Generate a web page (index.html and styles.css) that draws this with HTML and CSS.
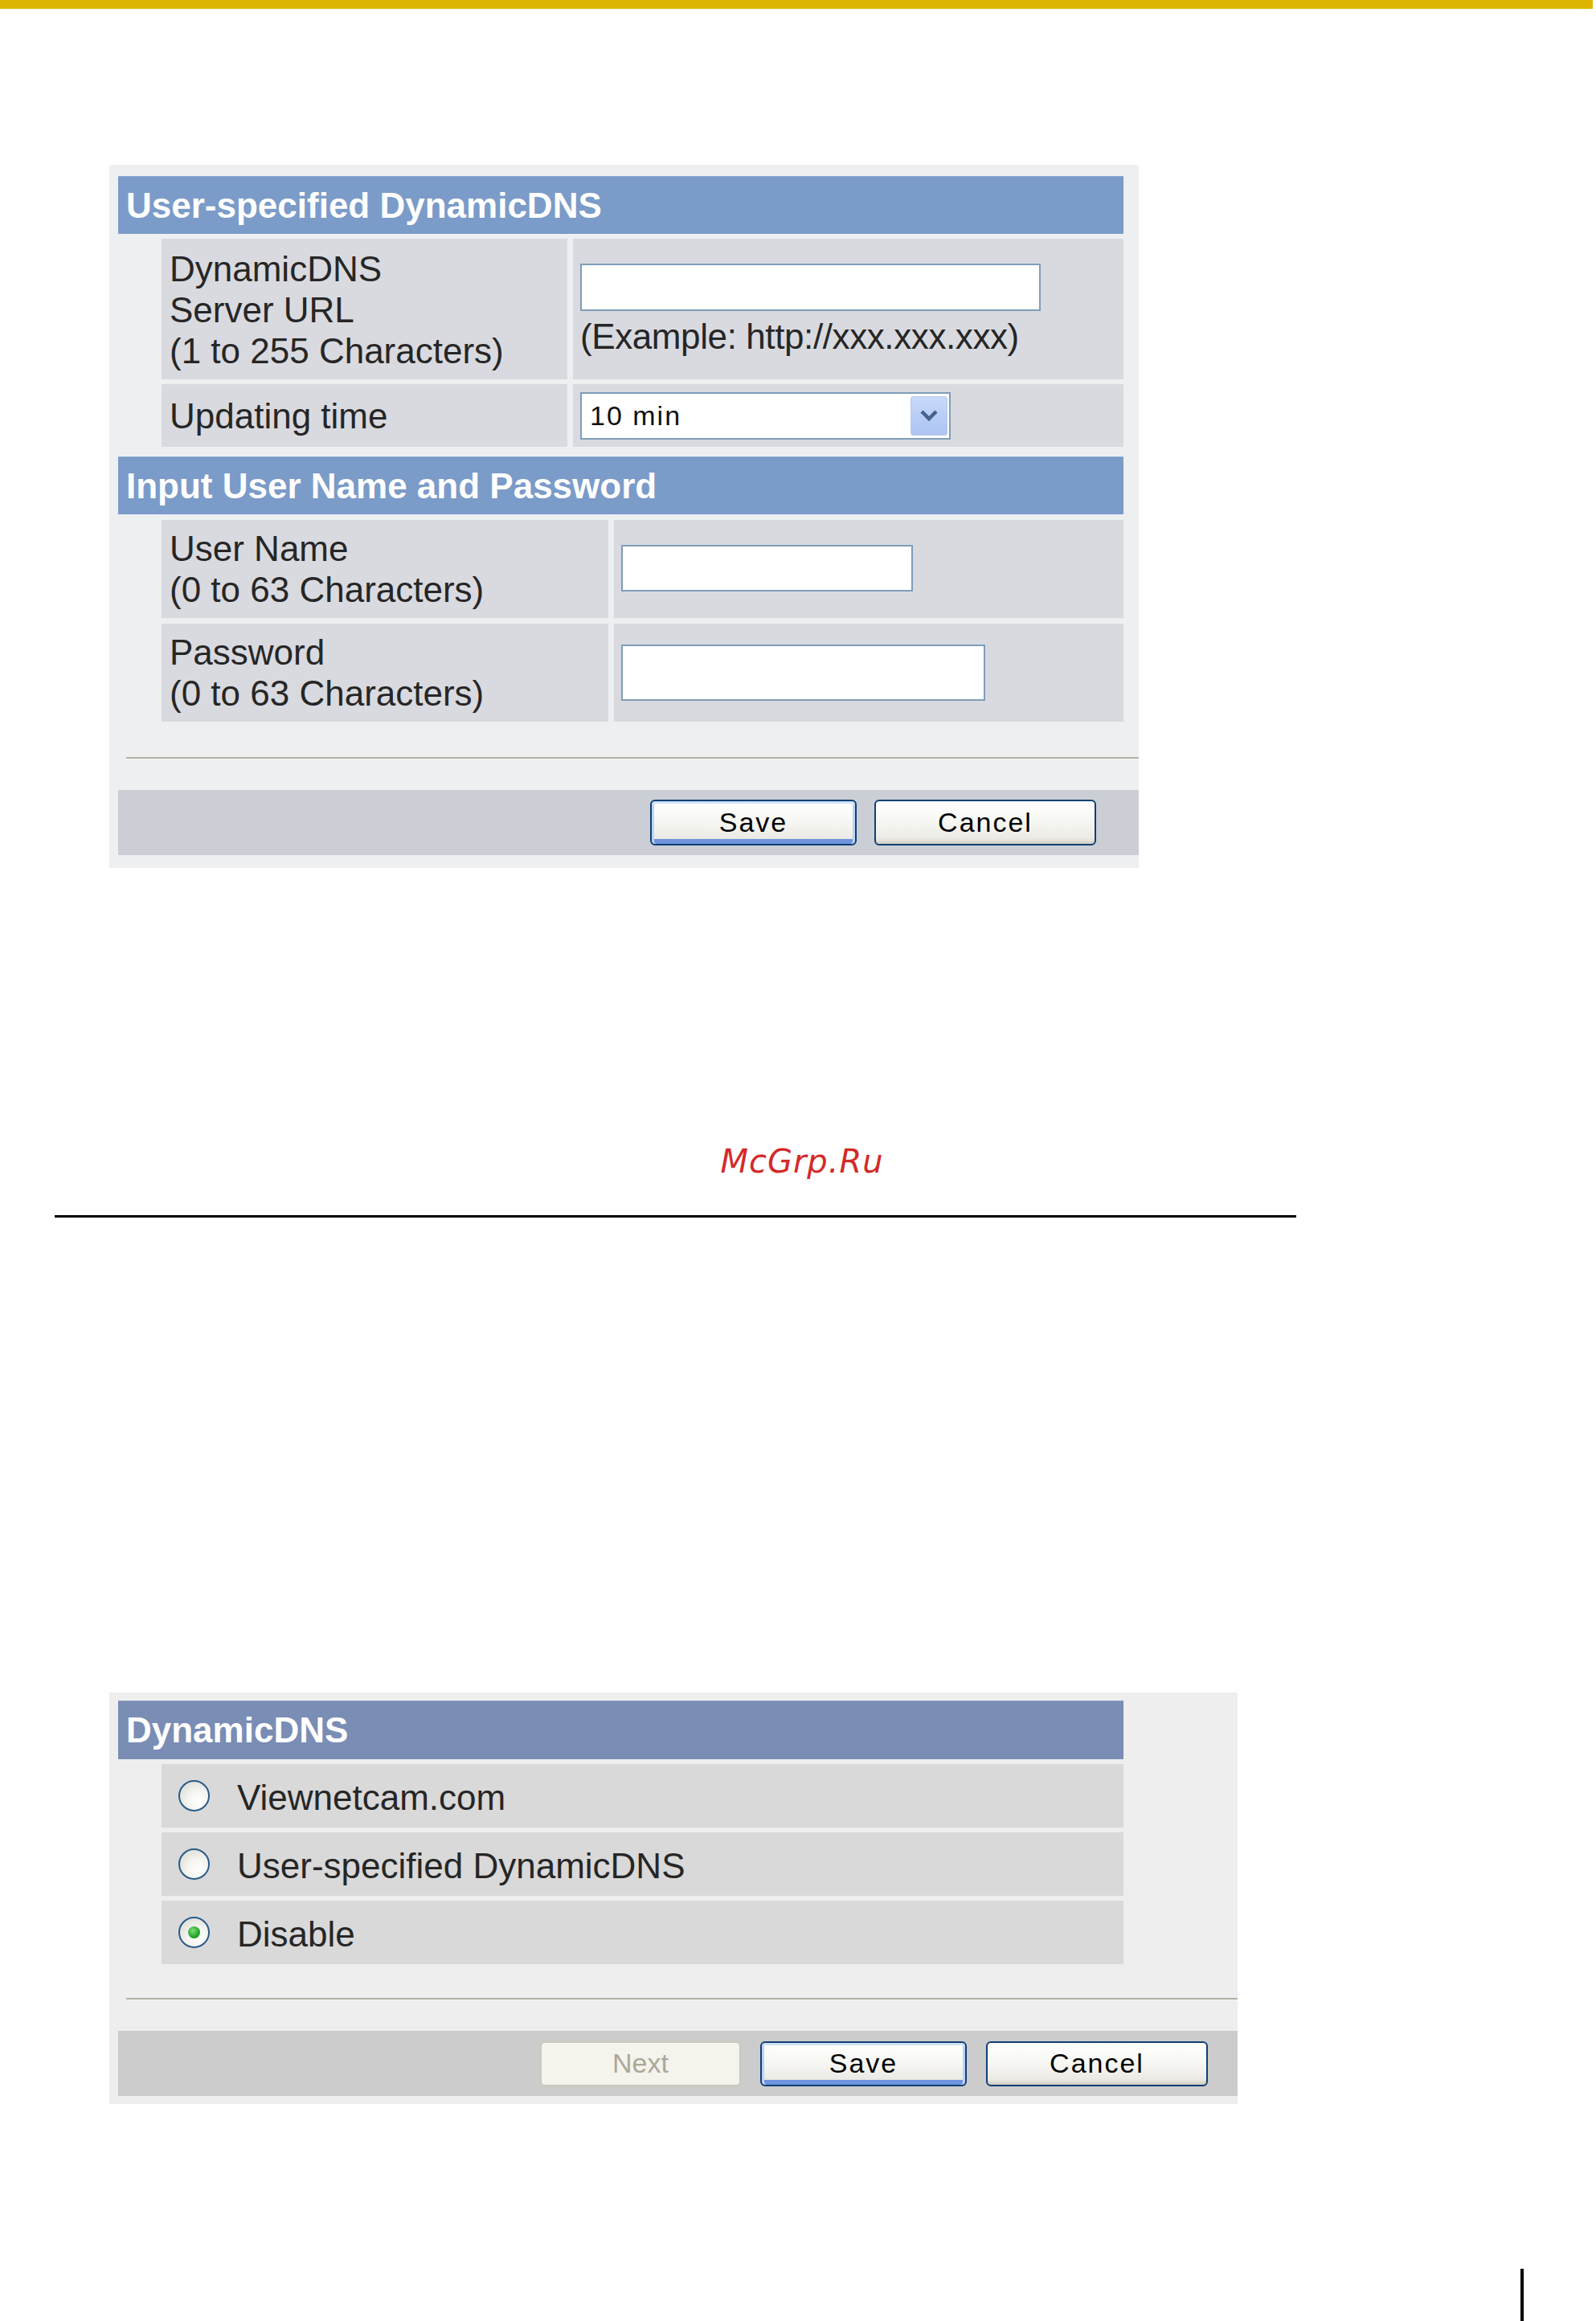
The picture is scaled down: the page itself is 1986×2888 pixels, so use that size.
FILE: index.html
```html
<!DOCTYPE html>
<html lang="en">
<head>
<meta charset="utf-8">
<title>DynamicDNS settings</title>
<link rel="stylesheet" href="styles.css">
</head>
<body>
<div class="topbar"></div>

<section class="panel panel-user">
  <div class="section-head">User-specified DynamicDNS</div>
  <div class="row row-url">
    <div class="cell label label-wide">DynamicDNS<br>Server URL<br>(1 to 255 Characters)</div>
    <div class="cell value value-stack">
      <input class="field field-url" type="text">
      <span class="hint">(Example: http://xxx.xxx.xxx)</span>
    </div>
  </div>
  <div class="row row-time">
    <div class="cell label label-wide">Updating time</div>
    <div class="cell value">
      <div class="select">
        <span class="select-text">10 min</span>
        <span class="select-arrow">
          <svg width="24" height="16" viewBox="0 0 24 16"><path d="M3 3 L12 12 L21 3" fill="none" stroke="#44628f" stroke-width="4.5" stroke-linejoin="miter"/></svg>
        </span>
      </div>
    </div>
  </div>

  <div class="section-head section-gap">Input User Name and Password</div>
  <div class="row row-cred">
    <div class="cell label label-narrow">User Name<br>(0 to 63 Characters)</div>
    <div class="cell value">
      <input class="field field-user" type="text">
    </div>
  </div>
  <div class="row row-cred">
    <div class="cell label label-narrow">Password<br>(0 to 63 Characters)</div>
    <div class="cell value">
      <input class="field field-pass" type="password">
    </div>
  </div>

  <div class="divider"></div>
  <div class="button-bar">
    <button class="btn btn-default btn-save">Save</button>
    <button class="btn btn-cancel">Cancel</button>
  </div>
</section>

<div class="watermark">McGrp.Ru</div>
<div class="rule"></div>

<section class="panel panel-mode">
  <div class="section-head">DynamicDNS</div>
  <div class="row choice">
    <span class="radio"></span>
    <span class="choice-text">Viewnetcam.com</span>
  </div>
  <div class="row choice">
    <span class="radio"></span>
    <span class="choice-text">User-specified DynamicDNS</span>
  </div>
  <div class="row choice">
    <span class="radio radio-on"></span>
    <span class="choice-text">Disable</span>
  </div>

  <div class="divider"></div>
  <div class="button-bar">
    <button class="btn btn-disabled btn-next" disabled>Next</button>
    <button class="btn btn-default btn-save">Save</button>
    <button class="btn btn-cancel">Cancel</button>
  </div>
</section>

<div class="endmark"></div>
</body>
</html>
```

FILE: styles.css
```css
* {
  box-sizing: border-box;
}

html,
body {
  margin: 0;
  padding: 0;
  background: #ffffff;
}

body {
  width: 1986px;
  height: 2888px;
  overflow: hidden;
  font-family: "Liberation Sans", Arial, sans-serif;
  font-size: 44px;
  line-height: 51px;
  color: #262626;
}

.topbar {
  width: 1982px;
  height: 11px;
  background: #ddb500;
}

/* ---------- settings panels ---------- */

.panel {
  margin-left: 136px;
  display: flex;
  flex-direction: column;
}

.panel-user {
  margin-top: 194px;
  width: 1281px;
  height: 875px;
  padding-top: 14px;
  background: #eeeff1;
}

.panel-mode {
  margin-top: 591px;
  width: 1404px;
  height: 512px;
  padding-top: 10px;
  background: #eeeeee;
}

.section-head {
  margin-left: 11px;
  width: 1251px;
  height: 72px;
  padding-left: 10px;
  line-height: 72px;
  font-weight: bold;
  font-size: 44px;
  color: #ffffff;
  background: #7b9bc8;
  border-top: 1px solid #8eabd3;
}

.section-gap {
  margin-top: 12px;
}

.panel-mode .section-head {
  height: 73px;
  line-height: 72px;
  background: #7a8db5;
  border-top-color: #8c9dc0;
}

.row {
  margin-left: 65px;
  width: 1197px;
  display: flex;
  gap: 7px;
}

.panel-user .row {
  margin-top: 6px;
}

.panel-user .row-cred {
  margin-top: 7px;
}

.cell {
  background: #d9dadf;
}

.label {
  padding: 10px 0 10px 10px;
}

.row-url .label {
  padding-top: 12px;
}

.label-wide {
  width: 505px;
}

.label-narrow {
  width: 556px;
}

.row-time {
  height: 78px;
}

.row-time .label {
  display: flex;
  align-items: center;
  padding-top: 0;
  padding-bottom: 0;
}

.value {
  flex: 1;
  display: flex;
  align-items: center;
  padding-left: 9px;
}

.value-stack {
  flex-direction: column;
  align-items: flex-start;
  justify-content: flex-start;
  gap: 6px;
  padding-top: 31px;
}

.hint {
  display: block;
  letter-spacing: -0.4px;
}

/* ---------- form controls ---------- */

.field {
  display: block;
  margin: 0;
  padding: 0 8px;
  border: 2px solid #7f9db9;
  background: #ffffff;
  font: inherit;
}

.field-url {
  width: 573px;
  height: 59px;
}

.field-user {
  width: 363px;
  height: 58px;
  margin-top: -3px;
}

.field-pass {
  width: 453px;
  height: 70px;
}

.select {
  width: 461px;
  height: 59px;
  border: 2px solid #7f9db9;
  background: #ffffff;
  display: flex;
  align-items: center;
  justify-content: space-between;
  padding: 0 2px 0 10px;
}

.select-text {
  font-size: 34px;
  letter-spacing: 2px;
  color: #111111;
}

.select-arrow {
  width: 46px;
  height: 49px;
  border-radius: 3px;
  background: linear-gradient(#c9dafb, #b6cbf6 60%, #aec4f1);
  border: 1px solid #b7caf0;
  display: flex;
  align-items: center;
  justify-content: center;
}

/* ---------- radio rows ---------- */

.choice {
  margin-top: 6px;
  height: 79px;
  gap: 0;
  align-items: center;
  padding-left: 21px;
  padding-top: 4px;
  background: #d9d9d9;
}

.radio {
  width: 39px;
  height: 39px;
  border-radius: 50%;
  border: 2px solid #2a5a8a;
  background: radial-gradient(circle at 65% 70%, #ffffff 0%, #f4f4f0 40%, #d6d6cf 100%);
  display: flex;
  align-items: center;
  justify-content: center;
  margin-right: 34px;
  margin-top: -4px;
}

.radio-on::after {
  content: "";
  width: 15px;
  height: 15px;
  border-radius: 50%;
  background: radial-gradient(circle at 40% 35%, #7de07d, #23a323 60%, #1a8a1a);
}

/* ---------- footer of each panel ---------- */

.divider {
  margin-left: 21px;
  height: 3px;
  border-top: 2px solid #b1b0a4;
  border-bottom: 1px solid #f6f6f2;
}

.panel-user .divider {
  margin-top: 44px;
}

.panel-mode .divider {
  margin-top: 42px;
}

.button-bar {
  margin-top: 38px;
  margin-left: 11px;
  height: 81px;
  display: flex;
  align-items: center;
  justify-content: flex-end;
}

.panel-user .button-bar {
  background: #cbced5;
  padding-right: 53px;
  gap: 22px;
}

.panel-mode .button-bar {
  background: #cccccc;
  padding-right: 37px;
  gap: 24px;
}

.btn {
  margin: 0;
  padding: 0;
  height: 57px;
  border: 2px solid #0f3f74;
  border-radius: 6px;
  font-family: "Liberation Sans", Arial, sans-serif;
  font-size: 34px;
  letter-spacing: 2px;
  color: #000000;
  background: linear-gradient(#ffffff 0%, #f7f7f4 45%, #ecebe6 85%, #d9d7cd 100%);
}

.panel-mode .btn {
  height: 56px;
}

.btn-save {
  width: 257px;
}

.btn-cancel {
  width: 276px;
}

.btn-default {
  box-shadow:
    inset 0 3px 0 #cfe2fb,
    inset 3px 0 0 #bcd3f6,
    inset -3px 0 0 #bcd3f6,
    inset 0 -6px 0 #6f93dc;
}

.btn-cancel {
  box-shadow: inset 0 -3px 0 #d6d3c6;
}

.btn-next {
  width: 250px;
  height: 52px;
  border-color: #cbc9bc;
  background: #f4f3ec;
  color: #aca899;
  letter-spacing: 0;
}

/* ---------- page decorations ---------- */

.watermark {
  margin-top: 341px;
  padding-left: 10px;
  height: 48px;
  line-height: 48px;
  text-align: center;
  font-family: "DejaVu Sans", sans-serif;
  font-style: italic;
  font-size: 40px;
  letter-spacing: 1px;
  color: #d32a2a;
}

.rule {
  margin-top: 43px;
  margin-left: 68px;
  width: 1545px;
  height: 3px;
  background: #000000;
}

.endmark {
  margin-top: 205px;
  margin-left: 1892px;
  width: 4px;
  height: 65px;
  background: #000000;
}
```
